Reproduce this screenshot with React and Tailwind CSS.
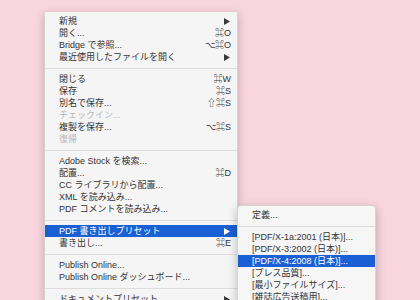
import React from "react";

const FONT = {
  fontFamily:
    '"Liberation Sans", "Noto Sans CJK JP", "DejaVu Sans", sans-serif',
};

function Arrow({ white }) {
  return (
    <svg width="6" height="7" viewBox="0 0 6 7" className="mr-[1px]">
      <polygon points="0,0 6,3.5 0,7" fill={white ? "#ffffff" : "#3a3a3a"} />
    </svg>
  );
}

function Row({ label, sc, arrow, disabled, active }) {
  return (
    <div
      className={
        "flex items-center justify-between h-[12px] pl-[14px] pr-[6px] whitespace-nowrap " +
        (active
          ? "bg-[#1b5fd4] text-white"
          : disabled
          ? "text-[#b8b8b8]"
          : "text-[#333333]")
      }
    >
      <span>{label}</span>
      {arrow ? <Arrow white={active} /> : sc ? <span>{sc}</span> : null}
    </div>
  );
}

function Sep() {
  return (
    <div className="h-[10px] flex items-center">
      <div className="h-px w-full bg-[#dedede]" />
    </div>
  );
}

export default function App() {
  return (
    <div
      className="relative w-[420px] h-[300px] overflow-hidden bg-[#f9d5de] pt-[12px] pl-[44px] text-[9px] leading-[12px]"
      style={FONT}
    >
      <div className="w-[194px] bg-[#f5f5f5] pt-[3px] pb-[6px] shadow-[0_2px_8px_rgba(0,0,0,0.22)] border border-[#d9d0d3] border-t-0">
        <Row label="新規" arrow />
        <Row label="開く..." sc="⌘O" />
        <Row label="Bridge で参照..." sc="⌥⌘O" />
        <Row label="最近使用したファイルを開く" arrow />
        <Sep />
        <Row label="閉じる" sc="⌘W" />
        <Row label="保存" sc="⌘S" />
        <Row label="別名で保存..." sc="⇧⌘S" />
        <Row label="チェックイン..." disabled />
        <Row label="複製を保存..." sc="⌥⌘S" />
        <Row label="復帰" disabled />
        <Sep />
        <Row label="Adobe Stock を検索..." />
        <Row label="配置..." sc="⌘D" />
        <Row label="CC ライブラリから配置..." />
        <Row label="XML を読み込み..." />
        <Row label="PDF コメントを読み込み..." />
        <Sep />
        <Row label="PDF 書き出しプリセット" arrow active />
        <Row label="書き出し..." sc="⌘E" />
        <Sep />
        <Row label="Publish Online..." />
        <Row label="Publish Online ダッシュボード..." />
        <Sep />
        <Row label="ドキュメントプリセット" arrow />
      </div>

      <div className="absolute left-[237px] top-[205px] w-[139px] bg-[#f6f6f6] rounded-[4px] pt-[3px] pb-[6px] border border-[#d4d4d4] shadow-[0_3px_10px_rgba(0,0,0,0.25)]">
        <Row label="定義..." />
        <Sep />
        <Row label="[PDF/X-1a:2001 (日本)]..." />
        <Row label="[PDF/X-3:2002 (日本)]..." />
        <Row label="[PDF/X-4:2008 (日本)]..." active />
        <Row label="[プレス品質]..." />
        <Row label="[最小ファイルサイズ]..." />
        <Row label="[雑誌広告送稿用]..." />
      </div>
    </div>
  );
}
